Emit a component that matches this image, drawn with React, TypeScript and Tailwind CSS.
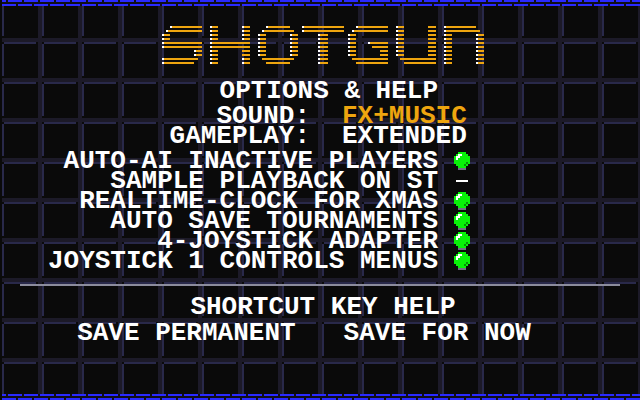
import type { ReactNode } from 'react'

type Stripe = [row: number, from: number, to: number, plain?: boolean]

// Logo stripes, one entry per run: row, start, end, and whether it lacks the white tip
const STRIPES: Stripe[] = [
  // S
  [0, 8, 40], [1, 4, 40], [2, 0, 8], [3, 0, 8], [4, 0, 40], [5, 0, 40],
  [6, 32, 40], [7, 32, 40], [8, 0, 36], [9, 0, 32],
  // H
  [0, 48, 56], [1, 48, 56], [2, 48, 56], [3, 48, 56], [4, 48, 88], [5, 48, 88],
  [6, 48, 56], [7, 48, 56], [8, 48, 56], [9, 48, 56],
  [0, 80, 88], [1, 80, 88], [2, 80, 88], [3, 80, 88],
  [6, 80, 88, true], [7, 80, 88, true], [8, 80, 88], [9, 80, 88],
  // O
  [0, 104, 128], [1, 100, 132], [2, 96, 104], [3, 96, 104], [4, 96, 104], [5, 96, 104],
  [6, 96, 104], [7, 96, 104], [8, 100, 132, true], [9, 104, 128, true],
  [2, 128, 136], [3, 128, 136], [4, 128, 136], [5, 128, 136], [6, 128, 136], [7, 128, 136],
  // T
  [0, 140, 182], [1, 140, 182], [2, 156, 166], [3, 156, 166], [4, 156, 166], [5, 156, 166],
  [6, 156, 166], [7, 156, 166], [8, 156, 166], [9, 156, 166],
  // G
  [0, 194, 226], [1, 190, 226], [2, 186, 194], [3, 186, 194], [4, 186, 194], [5, 186, 194],
  [6, 186, 194], [7, 186, 194], [8, 190, 226, true], [9, 194, 226, true],
  [4, 206, 226], [5, 210, 226, true], [6, 218, 226, true], [7, 218, 226, true],
  // U
  [0, 234, 242], [1, 234, 242], [2, 234, 242], [3, 234, 242], [4, 234, 242], [5, 234, 242],
  [6, 234, 242], [7, 234, 242], [8, 238, 274, true], [9, 242, 274, true],
  [0, 266, 274, true], [1, 266, 274, true], [2, 266, 274, true], [3, 266, 274, true],
  [4, 266, 274, true], [5, 266, 274, true], [6, 266, 274, true], [7, 266, 274, true],
  // N
  [0, 282, 314], [1, 282, 318], [2, 282, 290], [3, 282, 290], [4, 282, 290], [5, 282, 290],
  [6, 282, 290], [7, 282, 290], [8, 282, 290], [9, 282, 290],
  [2, 314, 322], [3, 314, 322], [4, 314, 322], [5, 314, 322],
  [6, 314, 322], [7, 314, 322], [8, 314, 322], [9, 314, 322],
]

const TOGGLES = [
  { label: 'AUTO-AI INACTIVE PLAYERS', on: true },
  { label: 'SAMPLE PLAYBACK ON ST', on: false },
  { label: 'REALTIME-CLOCK FOR XMAS', on: true },
  { label: 'AUTO SAVE TOURNAMENTS', on: true },
  { label: '4-JOYSTICK ADAPTER', on: true },
  { label: 'JOYSTICK 1 CONTROLS MENUS', on: true },
]

function Logo() {
  return (
    <svg width="322" height="38" role="img" aria-label="Shotgun" shapeRendering="crispEdges">
      {STRIPES.map(([row, from, to, plain], i) => (
        <g key={i}>
          <rect x={from} y={row * 4} width={to - from} height="2" fill="#eea50f" />
          {!plain && <rect x={from} y={row * 4} width="2" height="2" fill="#fff" />}
        </g>
      ))}
    </svg>
  )
}

function Backdrop() {
  return (
    <svg className="absolute inset-0 h-full w-full" aria-hidden="true" shapeRendering="crispEdges">
      <defs>
        <pattern id="tiles" width="40" height="40" patternUnits="userSpaceOnUse">
          <rect width="40" height="40" fill="#0a0a0a" />
          <path d="M0 0h2v40h-2zM38 0h2v40h-2zM0 0h40v2h-40zM0 38h40v2h-40z" fill="#1c1a28" />
          <path d="M2 4h2v32h-2zM4 2h32v2h-32z" fill="#29294a" />
        </pattern>
        <pattern id="dashes" width="16" height="6" patternUnits="userSpaceOnUse">
          <rect width="16" height="6" fill="#0f0f18" />
          <path d="M0 0h6v2h-6zM8 0h8v2h-8zM2 4h14v2h-14z" fill="#2a2aff" />
        </pattern>
      </defs>
      <rect width="100%" height="100%" fill="url(#tiles)" />
      <rect width="100%" height="6" fill="url(#dashes)" />
      <svg y="100%" overflow="visible">
        <g transform="translate(0 -6)">
          <rect width="100%" height="6" fill="url(#dashes)" />
        </g>
      </svg>
      <rect width="2" height="100%" fill="#0a0a0a" />
    </svg>
  )
}

function Ball() {
  return (
    <svg width="16" height="18" aria-hidden="true" shapeRendering="crispEdges">
      <path d="M4 14h8v4h-8z" fill="#6f6f80" />
      <path d="M4 0h8v2h2v2h2v8h-2v2h-2v2h-8v-2h-2v-2h-2v-8h2v-2h2z" fill="#08f208" />
      <path d="M4 2h4v2h-2v2h-2v2h-2v-4h2z" fill="#fff" />
      <path d="M12 10h2v2h-2zM10 12h2v2h-2z" fill="#079007" />
    </svg>
  )
}

function Toggle({ label, on }: { label: string; on: boolean }) {
  return (
    <label className="flex h-5 items-center justify-end gap-4 whitespace-nowrap">
      {label}
      <input type="checkbox" defaultChecked={on} className="peer sr-only" />
      <span className="hidden w-4 peer-checked:block"><Ball /></span>
      <span className="flex w-4 justify-center peer-checked:hidden">
        <span className="h-[2px] w-3 bg-white" />
      </span>
    </label>
  )
}

function Field({ label, children }: { label: string; children: ReactNode }) {
  return (
    <label className="grid grid-cols-[1fr_128px] grid-rows-[20px] items-center gap-8 whitespace-nowrap">
      <span className="text-right">{label}:</span>
      {children}
    </label>
  )
}

export default function App() {
  return (
    <main className="relative min-h-screen overflow-hidden bg-[#0a0a0a] font-['Liberation_Mono',monospace] text-[26px]/[18px] font-bold text-white">
      <Backdrop />
      <div className="relative flex flex-col px-5 pt-[26px]">
        <h1 className="flex justify-center pl-[6px]"><Logo /></h1>
        <div className="mx-auto mt-[18px] w-full max-w-[600px] pr-[150px]">
          <h2 className="pr-8 text-right">OPTIONS &amp; HELP</h2>
          <div className="mt-[6px]">
            <Field label="SOUND">
              <select className="h-7 appearance-none bg-transparent leading-7 text-[#eea50f]"><option>FX+MUSIC</option></select>
            </Field>
            <Field label="GAMEPLAY">
              <select className="h-7 appearance-none bg-transparent leading-7"><option>EXTENDED</option></select>
            </Field>
          </div>
          <div className="mt-[5px]">
            {TOGGLES.map(t => <Toggle key={t.label} {...t} />)}
          </div>
        </div>
        <hr className="mt-[13px] border-t-2 border-[#8c8c9c]" />
        <h2 className="mt-3 pl-[6px] text-center">SHORTCUT KEY HELP</h2>
        <div className="mt-2 flex justify-center gap-12 pr-8">
          <button>SAVE PERMANENT</button>
          <button>SAVE FOR NOW</button>
        </div>
      </div>
    </main>
  )
}
